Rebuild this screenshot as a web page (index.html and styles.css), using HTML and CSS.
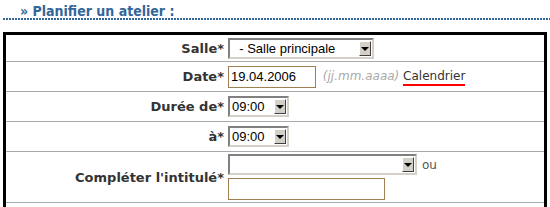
FILE: index.html
```html
<!DOCTYPE html>
<html lang="fr">
<head>
  <meta charset="UTF-8" />
  <title>Planifier un atelier</title>
  <link rel="stylesheet" href="styles.css">
</head>
<body>
  <!-- Titre -->
  <h2 class="section-title">&raquo; Planifier un atelier :</h2>

  <!-- Formulaire -->
  <table class="form-table">
    <tr class="row-salle">
      <td class="label">Salle*</td>
      <td class="field">
        <span class="combo combo-salle"><span class="combo-value">&nbsp; - Salle principale</span><span class="combo-arrow"></span></span>
      </td>
    </tr>
    <tr class="row-date">
      <td class="label">Date*</td>
      <td class="field">
        <span class="text-input date-input">19.04.2006</span>
        <span class="hint">(jj.mm.aaaa)</span>
        <a class="link" href="#">Calendrier</a>
      </td>
    </tr>
    <tr class="row-time">
      <td class="label">Durée de*</td>
      <td class="field">
        <span class="combo combo-time"><span class="combo-value">09:00</span><span class="combo-arrow"></span></span>
      </td>
    </tr>
    <tr class="row-time">
      <td class="label">à*</td>
      <td class="field">
        <span class="combo combo-time"><span class="combo-value">09:00</span><span class="combo-arrow"></span></span>
      </td>
    </tr>
    <tr class="row-title">
      <td class="label">Compléter l'intitulé*</td>
      <td class="field">
        <div class="line">
          <span class="combo combo-wide"><span class="combo-value"></span><span class="combo-arrow"></span></span>
          <span class="ou">ou</span>
        </div>
        <span class="text-input wide-input"></span>
      </td>
    </tr>
    <tr class="row-rest">
      <td class="label"></td>
      <td class="field"></td>
    </tr>
  </table>
</body>
</html>
```

FILE: styles.css
```css
body {
  margin: 0;
  background: #fff;
  font-family: 'DejaVu Sans', Verdana, sans-serif;
  font-size: 12px;
  color: #333;
}

.section-title {
  margin: 0 0 12px 3px;
  padding: 4px 0 2px 17px;
  font-family: 'DejaVu Sans Condensed', 'DejaVu Sans', sans-serif;
  font-size: 14px;
  font-weight: bold;
  color: #336699;
  line-height: 14px;
  background-image: linear-gradient(to right, #336699 2px, transparent 2px);
  background-size: 3px 2px;
  background-repeat: repeat-x;
  background-position: 0 100%;
}

.form-table {
  border-collapse: collapse;
  border: 3px solid #000;
  width: 544px;
  margin-left: 3px;
}

.form-table td {
  border-bottom: 1px solid #aaa;
  padding: 0;
  vertical-align: middle;
}

.label {
  width: 218px;
  text-align: right;
  font-size: 13px;
  font-weight: bold;
  padding-right: 2px !important;
  white-space: nowrap;
}

.field { padding-left: 2px !important; }

.row-salle td { height: 26px; }
.row-date td { height: 29px; }
.row-time td { height: 29px; }
.row-title td { height: 50px; }
.row-rest td { height: 20px; }

.combo {
  display: inline-flex;
  align-items: stretch;
  box-sizing: border-box;
  height: 21px;
  border: 2px solid;
  border-color: #808080 #d4d0c8 #d4d0c8 #808080;
  background: #fff;
  vertical-align: middle;
  font-family: 'Liberation Sans', Arial, sans-serif;
  font-size: 13px;
  color: #000;
}

.combo-value {
  flex: 1;
  line-height: 17px;
  padding-left: 2px;
  white-space: nowrap;
}

.combo-arrow {
  width: 12px;
  box-sizing: border-box;
  margin: 1px 1px 1px 0;
  background: #d4d0c8;
  border: 1px solid;
  border-color: #fff #404040 #404040 #fff;
  display: flex;
  align-items: center;
  justify-content: center;
}

.combo-arrow::after {
  content: "";
  border-left: 4px solid transparent;
  border-right: 4px solid transparent;
  border-top: 4px solid #000;
  margin-top: 1px;
}

.combo-salle { width: 146px; }
.combo-time { width: 61px; }
.combo-wide { width: 189px; }

.text-input {
  display: inline-block;
  box-sizing: border-box;
  height: 22px;
  border: 1px solid #a08050;
  vertical-align: middle;
  font-family: 'Liberation Sans', Arial, sans-serif;
  font-size: 13px;
  line-height: 20px;
  padding-left: 2px;
  color: #000;
}

.date-input { width: 88px; }
.wide-input { width: 157px; margin-top: 3px; }

.hint {
  font-style: italic;
  color: #aaa;
  margin-left: 3px;
}

.link {
  color: #333;
  text-decoration: none;
  border-bottom: 2px solid #f00;
  padding-bottom: 1px;
}

.line {
  display: flex;
  align-items: center;
}

.ou {
  margin-left: 5px;
  color: #555;
}
```
